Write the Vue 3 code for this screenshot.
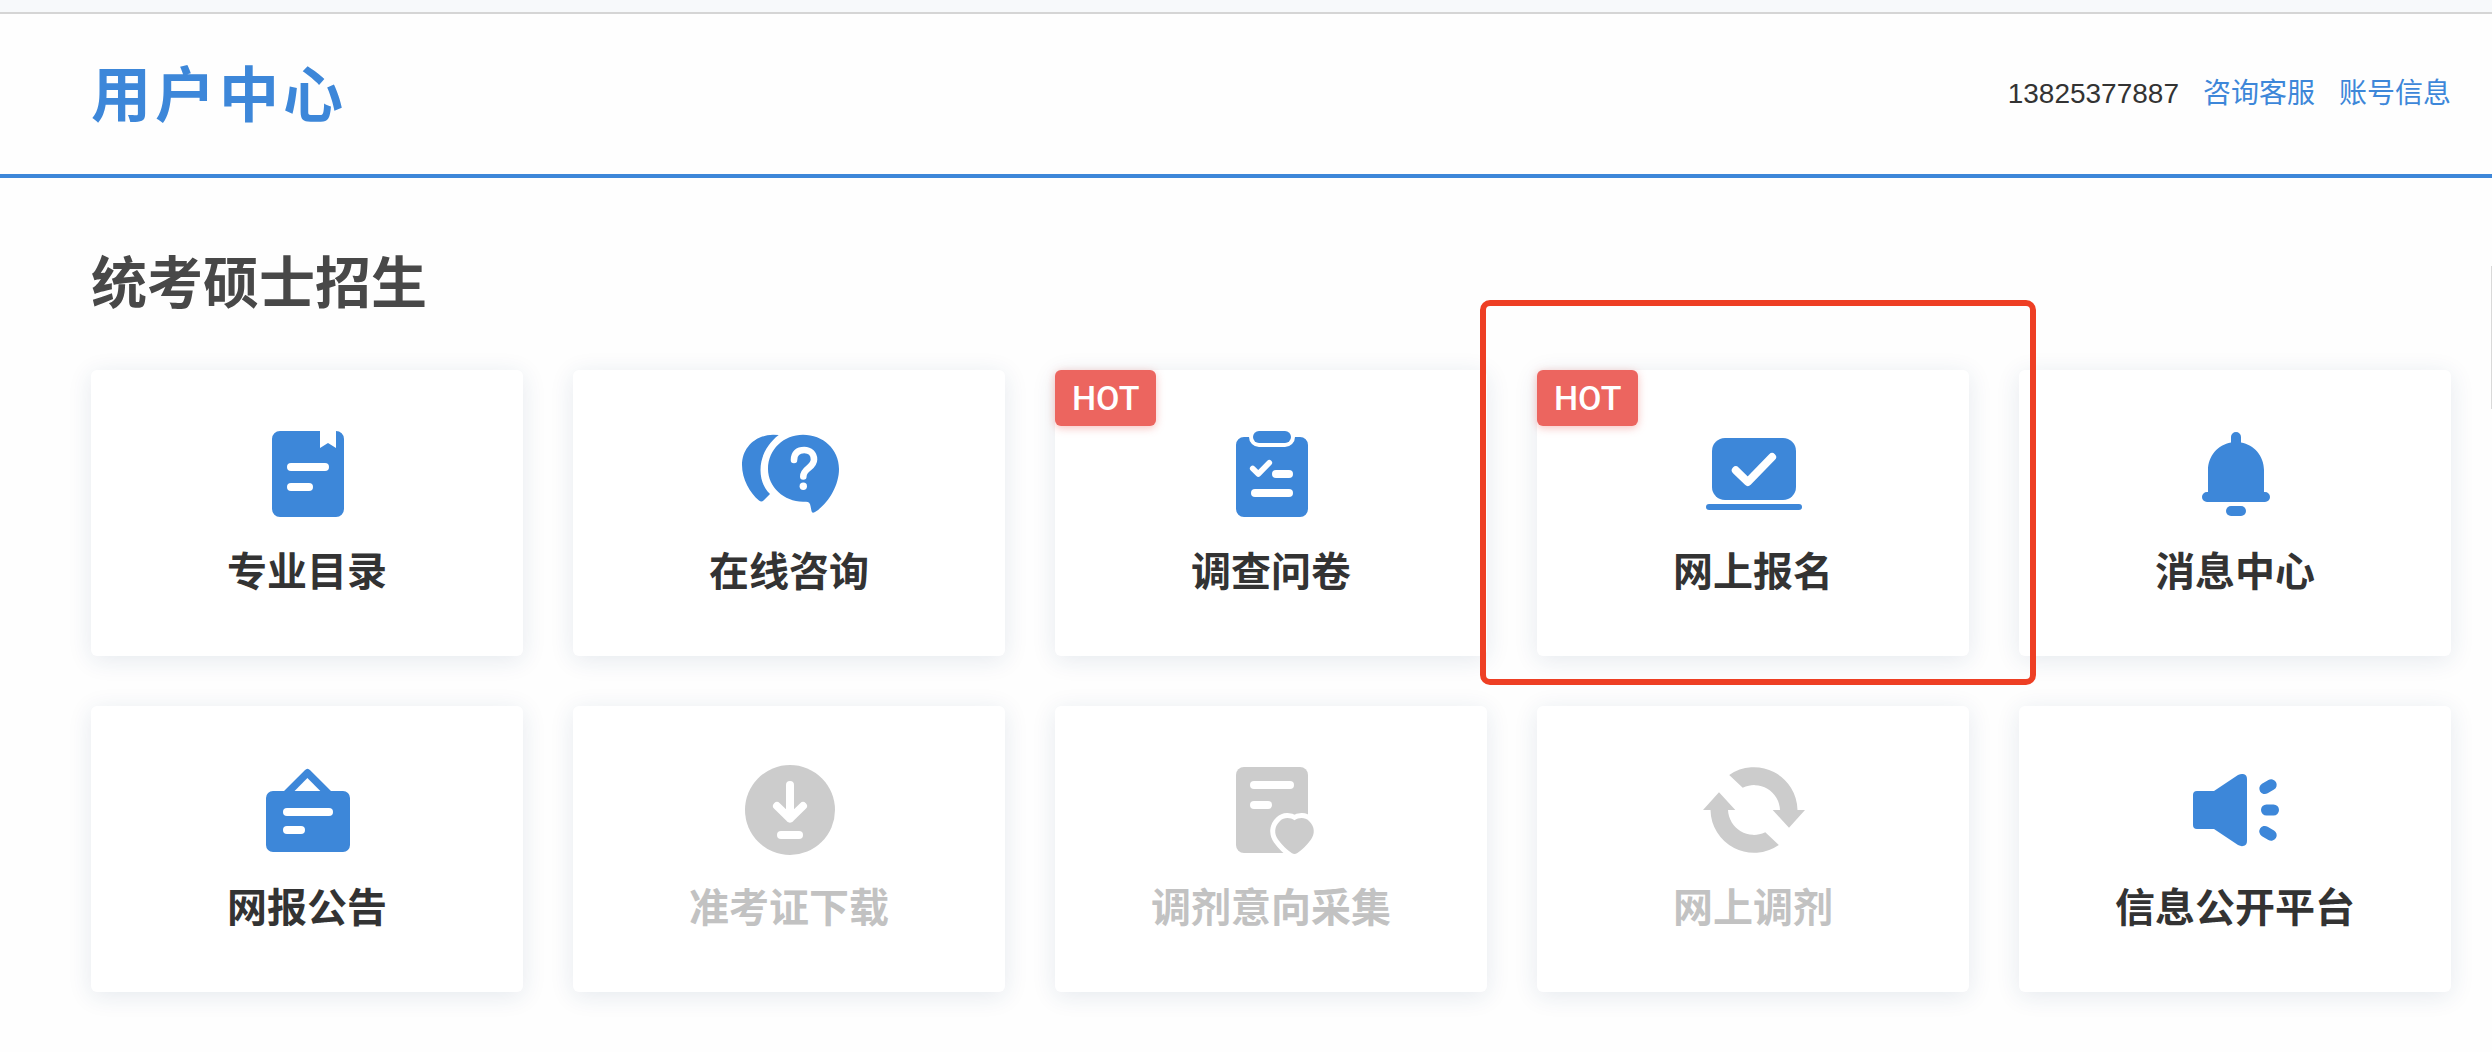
<template>
  <div class="page">
    <div class="topStrip"></div>
    <header class="header">
      <h1 class="title">用户中心</h1>
      <nav class="account">
        <span>13825377887</span>
        <a href="#service">咨询客服</a>
        <a href="#account">账号信息</a>
      </nav>
    </header>

    <main class="content">
      <h2 class="heading">统考硕士招生</h2>
      <div class="cards">
        <div v-for="item in items" :key="item.icon" class="cell">
          <button type="button" class="card" :disabled="item.disabled">
            <svg class="icon" viewBox="0 0 96 96" aria-hidden="true">
              <template v-if="item.icon === 'catalog'">
                <path d="M21 5H61V22L69 17L77 22V5A8 8 0 0 1 85 13V83A8 8 0 0 1 77 91H21A8 8 0 0 1 13 83V13A8 8 0 0 1 21 5Z" />
                <rect class="light" x="28" y="37" width="42" height="8" rx="4" />
                <rect class="light" x="28" y="57" width="26" height="8" rx="4" />
              </template>
              <template v-else-if="item.icon === 'consult'">
                <path d="M37.7 9C27 17 19.5 30 19.5 44C19.5 54 23 62 29 68L22.5 74.5Q20.5 76.5 18 74.5C9 67 1 53 1 39C1 22 14 9 32 8.7Z" />
                <path d="M62 8.7C82 8.7 98 23 98 43C98 60 87 78 74 86Q71 88 70.5 85L69.5 80Q69 75.7 65 75.7H62C43 75.5 27 61 27 43C27 23 43 8.7 62 8.7Z" />
                <path class="lightLine" stroke-width="6.6" d="M53 34C53 27 57 24 63.2 24C69 24 73 28 73 33.5C73 42 62.3 42 62.3 50.5" />
                <circle class="light" cx="62.3" cy="60.2" r="3.7" />
              </template>
              <template v-else-if="item.icon === 'survey'">
                <path d="M21 11H26A10 10 0 0 0 36 21H62A10 10 0 0 0 72 11H77A8 8 0 0 1 85 19V83A8 8 0 0 1 77 91H21A8 8 0 0 1 13 83V19A8 8 0 0 1 21 11Z" />
                <rect x="30" y="5" width="38" height="12" rx="6" />
                <path class="lightLine" stroke-width="5.6" d="M29.7 42.5L35.3 48L46.3 36.7" />
                <rect class="light" x="49" y="44" width="21" height="8" rx="4" />
                <rect class="light" x="28" y="63" width="42" height="8" rx="4" />
              </template>
              <template v-else-if="item.icon === 'apply'">
                <rect x="7" y="12" width="84" height="62" rx="13" />
                <rect x="1" y="78" width="96" height="6" rx="3" />
                <path class="lightLine" stroke-width="8" d="M30.8 44.3L42.8 56L67.1 31" />
              </template>
              <template v-else-if="item.icon === 'message'">
                <path d="M44 16.4V11A5 5 0 0 1 54 11V16.4C67 18.5 77 30 77 44V66H78A5 5 0 0 1 78 76H20A5 5 0 0 1 20 66H21V44C21 30 31 18.5 44 16.4Z" />
                <rect x="39" y="80" width="20" height="10" rx="5" />
              </template>
              <template v-else-if="item.icon === 'notice'">
                <path d="M25 29L45.8 8.2Q48.5 5.2 51.2 8.2L72 29H84A7 7 0 0 1 91 36V83A7 7 0 0 1 84 90H14A7 7 0 0 1 7 83V36A7 7 0 0 1 14 29Z" />
                <path class="light" d="M48.4 16L61.3 29H35.6Z" />
                <rect class="light" x="24" y="46" width="50" height="8" rx="4" />
                <rect class="light" x="24" y="64" width="22" height="8" rx="4" />
              </template>
              <template v-else-if="item.icon === 'ticket'">
                <circle cx="49" cy="48" r="45" />
                <path class="lightLine" stroke-width="8" d="M49 23V56.6M36 44L49 56.6L62 44" />
                <rect class="light" x="36" y="69" width="26" height="8" rx="4" />
              </template>
              <template v-else-if="item.icon === 'intent'">
                <path d="M21 5H77A8 8 0 0 1 85 13V56L72 76L62 91H21A8 8 0 0 1 13 83V13A8 8 0 0 1 21 5Z" />
                <rect class="light" x="27" y="19" width="44" height="8" rx="4" />
                <rect class="light" x="27" y="39" width="22" height="8" rx="4" />
                <path class="heart" d="M71.5 58.3C76 55.3 82 55.2 86 59C92 64.5 92 72 88 77.5C84 83 79 88 74 91.3Q71.5 92.7 69 91.3C64 88 59 83 55 77.5C51 72 51 64.5 57 59C61 55.2 67 55.3 71.5 58.3Z" />
              </template>
              <template v-else-if="item.icon === 'transfer'">
                <path d="M24.2 13A43.5 43.5 0 0 1 92.5 48H100L84 65.7L67.7 48H75A26 26 0 0 0 37.7 25.7Z" />
                <path d="M73.8 83A43.5 43.5 0 0 1 5.5 48H-2L14 30.3L30.3 48H23A26 26 0 0 0 60.3 70.3Z" />
              </template>
              <template v-else>
                <path d="M10 29H27L51 13Q54 11.5 56 12Q60 12.5 60 17V79Q60 83.5 56 84Q54 84.5 51 83L27 67H10Q6 67 6 63V33Q6 29 10 29Z" />
                <path class="ray" d="M77.8 26.6L84.2 22.8M79.5 48H86.5M77.8 69.4L84.2 73.2" />
              </template>
            </svg>
            <span class="label">{{ item.label }}</span>
          </button>
          <span v-if="item.hot" class="hot">HOT</span>
          <div v-if="item.marked" class="marker"></div>
        </div>
      </div>
    </main>

    <aside class="sideTab"></aside>
  </div>
</template>

<script setup>
const items = [
  { icon: 'catalog', label: '专业目录' },
  { icon: 'consult', label: '在线咨询' },
  { icon: 'survey', label: '调查问卷', hot: true },
  { icon: 'apply', label: '网上报名', hot: true, marked: true },
  { icon: 'message', label: '消息中心' },
  { icon: 'notice', label: '网报公告' },
  { icon: 'ticket', label: '准考证下载', disabled: true },
  { icon: 'intent', label: '调剂意向采集', disabled: true },
  { icon: 'transfer', label: '网上调剂', disabled: true },
  { icon: 'platform', label: '信息公开平台' }
];
</script>

<style>
body {
  background-color: #fefefe;
}
</style>

<style scoped>
.page {
  position: relative;
  overflow: hidden;
  color: #333;
  font-family: "Liberation Sans", "Noto Sans CJK SC", sans-serif;
}

.topStrip {
  height: 12px;
  background-color: #f7f9fb;
  border-bottom: 2px solid #d5d5d5;
}

.header {
  display: flex;
  align-items: center;
  justify-content: space-between;
  height: 160px;
  padding: 0 41px 0 91px;
  border-bottom: 4px solid #3d87d9;
}

.title {
  margin: 0;
  padding-top: 6px;
  font-size: 60px;
  line-height: 80px;
  letter-spacing: 4px;
  color: #3d87d9;
}

.account {
  display: flex;
  gap: 24px;
  font-size: 28px;
  line-height: 40px;
}

.account a {
  color: #3d87d9;
  text-decoration: none;
}

.content {
  padding: 66px 41px 60px 91px;
}

.heading {
  margin: 0 0 46px;
  font-size: 56px;
  line-height: 80px;
  color: #484848;
}

.cards {
  display: grid;
  grid-template-columns: repeat(5, 1fr);
  gap: 50px;
}

.cell {
  position: relative;
}

.card {
  display: flex;
  flex-direction: column;
  align-items: center;
  gap: 22px;
  width: 100%;
  padding: 56px 0;
  border: 0;
  border-radius: 6px;
  background-color: #fff;
  box-shadow: 0 4px 24px rgba(30, 60, 110, 0.11);
  color: #333;
  font-family: inherit;
  cursor: pointer;
}

.card:disabled {
  color: #c2c2c2;
  cursor: default;
}

.icon {
  width: 96px;
  height: 96px;
  overflow: visible;
  fill: #3d87d9;
  stroke-linecap: round;
  stroke-linejoin: round;
}

.card:disabled .icon {
  fill: #ccc;
}

.icon .light {
  fill: #fff;
}

.lightLine {
  fill: none;
  stroke: #fff;
}

.heart {
  stroke: #fff;
  stroke-width: 10px;
  paint-order: stroke;
}

.ray {
  fill: none;
  stroke: #3d87d9;
  stroke-width: 11px;
}

.label {
  font-size: 40px;
  font-weight: 700;
  line-height: 56px;
}

.hot {
  position: absolute;
  top: 0;
  left: 0;
  padding: 0 17px;
  border-radius: 6px;
  background-color: #ec655f;
  box-shadow: 0 2px 8px rgba(236, 101, 95, 0.4);
  color: #fff;
  font-family: Roboto, "Liberation Sans", sans-serif;
  font-size: 34px;
  font-weight: 500;
  line-height: 56px;
}

.marker {
  position: absolute;
  z-index: 1;
  top: -70px;
  right: -67px;
  bottom: -29px;
  left: -57px;
  border: 6px solid #ee3f24;
  border-radius: 10px;
  pointer-events: none;
}

.sideTab {
  position: absolute;
  top: 266px;
  right: 0;
  width: 1px;
  height: 143px;
  background-color: #d9d9d9;
}
</style>
